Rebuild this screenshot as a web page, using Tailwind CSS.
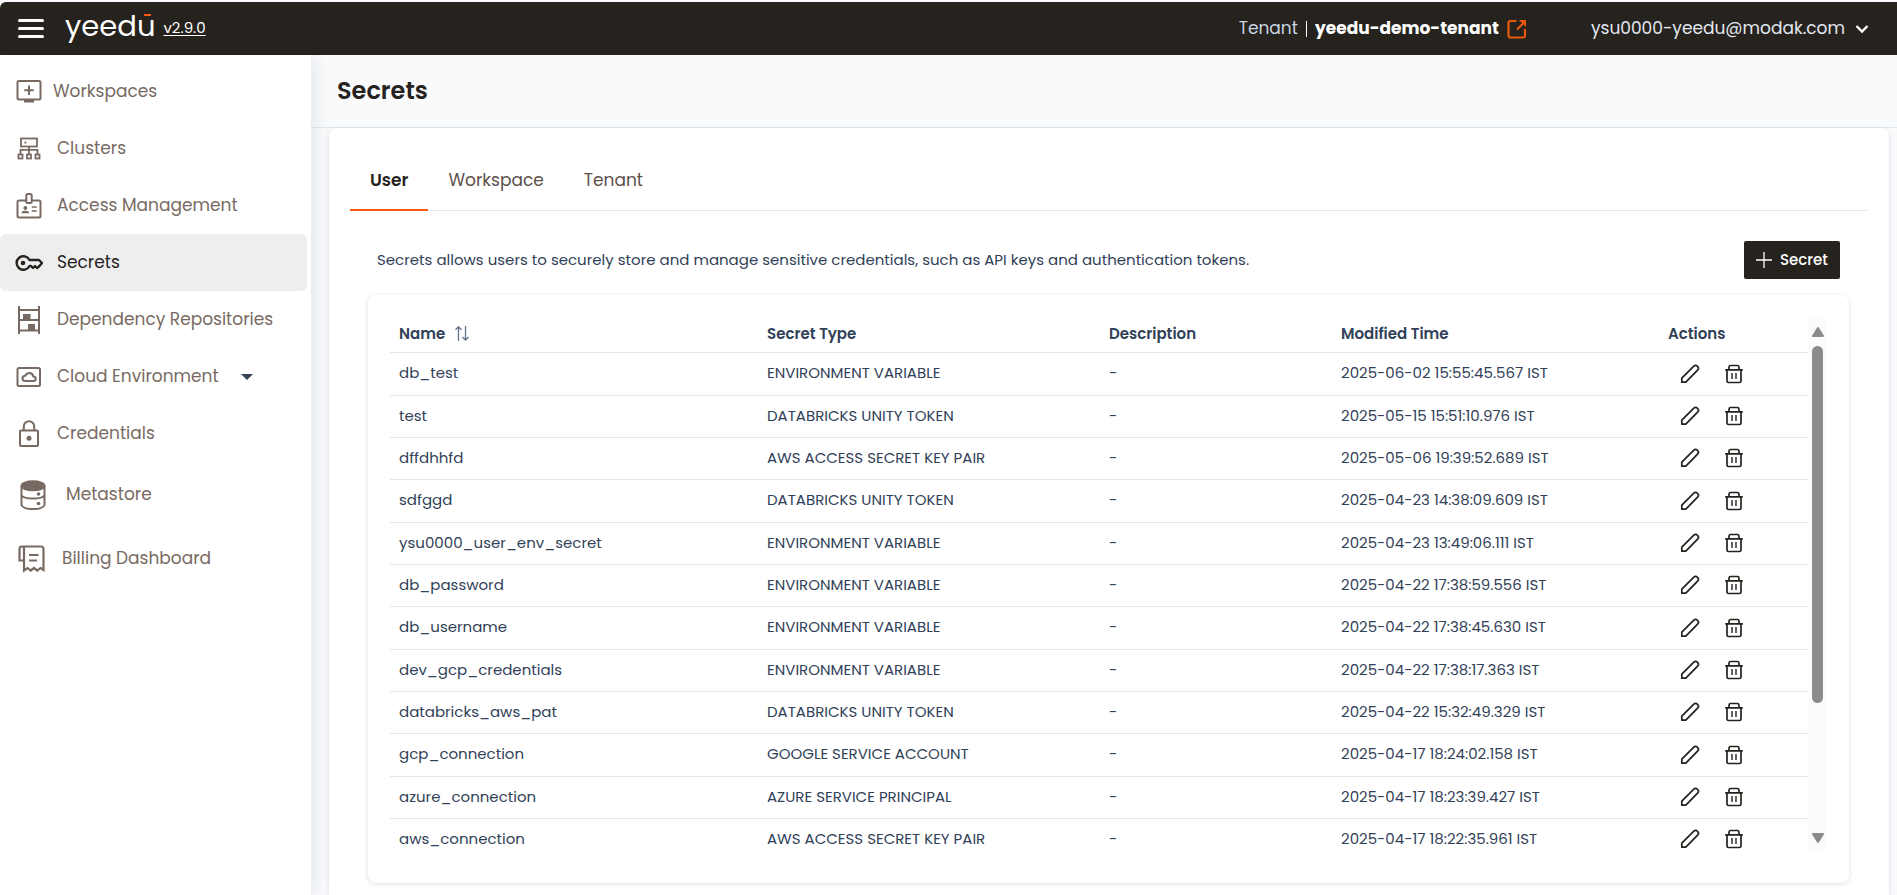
<!DOCTYPE html>
<html lang="en">
<head>
<meta charset="utf-8">
<meta name="viewport" content="width=device-width, initial-scale=1">
<title>Secrets - Yeedu</title>
<script src="https://cdn.jsdelivr.net/npm/@tailwindcss/browser@4"></script>
</head>
<body class="flex h-screen flex-col overflow-hidden bg-slate-50 pt-[2px] font-['Poppins','Inter',sans-serif] text-slate-700">

<svg class="hidden" aria-hidden="true">
  <symbol id="pencil" viewBox="0 0 20 20"><path d="M1.800 18.200v-4L13.600 2.400a2.600 2.600 0 0 1 4 3.800L5.800 18.200z" fill="none" stroke="#26221e" stroke-width="1.700" stroke-linejoin="round"/></symbol>
  <symbol id="trash" viewBox="0 0 20 20"><path d="M1.200 5.800h17.600M5 5.500V3.600Q5 1.500 6.600 1.500h6.800Q15 1.500 15 3.600v1.900M3 6v11q0 1.500 1.500 1.500h11q1.500 0 1.500-1.500V6" fill="none" stroke="#26221e" stroke-width="1.700"/><path d="M8 9v6M12 9v6" fill="none" stroke="#26221e" stroke-width="1.400"/></symbol>
</svg>

<header class="flex h-[53px] shrink-0 items-center justify-between rounded-tl-md bg-[#26221e] pr-7 pl-[18px]">
  <div class="flex items-center">
    <button type="button" aria-label="Toggle menu" class="flex w-[26px] flex-col gap-[5px]">
      <span class="h-[3px] w-full rounded-full bg-white"></span>
      <span class="h-[3px] w-full rounded-full bg-white"></span>
      <span class="h-[3px] w-full rounded-full bg-white"></span>
    </button>
    <a href="#" aria-label="yeedu home" class="relative ml-[21px] pb-[6px] text-[29px] leading-8 text-white">yeedu<span class="absolute top-1 right-1 h-[2px] w-[7px] bg-[#f4590b]"></span></a>
    <a href="#" class="ml-2 text-[15px] text-white underline underline-offset-2">v2.9.0</a>
  </div>
  <div class="flex items-center text-[17px]">
    <span class="text-slate-300">Tenant</span>
    <span class="mx-2 h-4 w-px bg-white"></span>
    <a href="#" class="flex items-center gap-2 font-bold text-white">yeedu-demo-tenant
      <svg class="size-5" viewBox="0 0 20 20" fill="none" stroke="#e8590c" stroke-width="2.200"><path d="M9.500 2H3.500Q1.500 2 1.500 4v12.500q0 2 2 2h12.500q2 0 2-2v-6.500"/><path d="M10 10.500l7-7"/><path d="M12 1h7v7z" fill="#e8590c" stroke="none"/></svg></a>
    <button type="button" class="ml-16 flex items-center gap-[10px] text-slate-200">ysu0000-yeedu@modak.com
      <svg class="h-3 w-[14px]" viewBox="0 0 14 12" fill="none" stroke="#fff" stroke-width="2.400"><path d="M1.500 3l5.500 5.500L12.500 3"/></svg></button>
  </div>
</header>

<div class="flex min-h-0 flex-1">
  <nav class="z-10 w-[311px] shrink-0 bg-white pt-2 text-[17px] text-[#786a62] shadow-[4px_0_16px_rgba(15,23,42,0.08)]">
    <ul>
      <li><a href="#" class="mr-1 flex h-[57px] items-center gap-[11px] pl-4">
        <svg class="size-[26px]" viewBox="0 0 26 26" fill="none" stroke="currentColor" stroke-width="2"><rect x="1.500" y="2" width="23" height="18.500" rx="1.500"/><path d="M13 6.500v9.500M8.300 11.200h9.400"/><path d="M8 20.500h10v3H8z" fill="currentColor" stroke="none"/></svg>Workspaces</a></li>
      <li><a href="#" class="mr-1 flex h-[57px] items-center gap-[15px] pl-4">
        <svg class="size-[26px]" viewBox="0 0 26 26" fill="none" stroke="currentColor" stroke-width="1.800"><rect x="5" y="2.500" width="16" height="8"/><path d="M8.500 6.500h1.800M13 10.500v8M4.500 18.500v-4.700h17v4.700"/><rect x="2.500" y="18.500" width="4" height="4"/><rect x="11" y="18.500" width="4" height="4"/><rect x="19.500" y="18.500" width="4" height="4"/></svg>Clusters</a></li>
      <li><a href="#" class="mr-1 flex h-[57px] items-center gap-[15px] pl-4">
        <svg class="size-[26px]" viewBox="0 0 26 26" fill="none" stroke="currentColor" stroke-width="2"><path d="M10 7.500H3Q1.500 7.500 1.500 9v14Q1.500 24.500 3 24.500h20q1.500 0 1.500-1.500V9Q24.500 7.500 23 7.500h-7"/><rect x="10.300" y="1" width="5.400" height="9" rx="1.500"/><circle cx="9.300" cy="15" r="1.900" fill="currentColor" stroke="none"/><path d="M5.500 20.200q0-2.400 3.800-2.400t3.800 2.400z" fill="currentColor" stroke="none"/><path d="M15.800 14h5M15.800 18h5" stroke-width="1.600"/></svg>Access Management</a></li>
      <li><a href="#" aria-current="page" class="mr-1 flex h-[57px] items-center gap-[14px] rounded-md bg-[#eeeeee] pl-[15px] text-[#26221e]">
        <svg class="h-4 w-7" viewBox="0 0 28 16" fill="none" stroke="currentColor" stroke-width="2.400"><path d="M14.500 5A6.800 6.800 0 1 0 14.500 11h1.500l2 2 2-2 2 2 2-1.500L27 8l-3-3z" stroke-linejoin="round"/><circle cx="8" cy="8" r="2.300" fill="currentColor" stroke="none"/></svg>Secrets</a></li>
      <li><a href="#" class="mr-1 flex h-[57px] items-center gap-[15px] pl-4">
        <svg class="h-7 w-[26px]" viewBox="0 0 26 28" fill="none" stroke="currentColor" stroke-width="2"><path d="M3 0v28M23 0v28M3 4h20M3 14h20M3 24.500h20"/><path d="M7 8h7.500v6H7zM12 18h7v6h-7z" fill="currentColor" stroke="none"/></svg>Dependency Repositories</a></li>
      <li><a href="#" class="mr-1 flex h-[57px] items-center gap-[15px] pl-4">
        <svg class="size-[26px]" viewBox="0 0 26 26" fill="none" stroke="currentColor" stroke-width="2"><rect x="1.500" y="4" width="22.500" height="18" rx="1.500"/><path d="M8.500 17h9q2.300-.3 2.300-2.300t-2.500-2.300Q16.500 9 13.500 9T9.500 11.500Q6.500 12 6.500 14.300T8.500 17z"/></svg>Cloud Environment
        <svg class="ml-[7px] h-[6px] w-3" viewBox="0 0 12 6"><path d="M0 0h12L6 6z" fill="#334155"/></svg></a></li>
      <li><a href="#" class="mr-1 flex h-[57px] items-center gap-[15px] pl-4">
        <svg class="h-7 w-[26px]" viewBox="0 0 26 28" fill="none" stroke="currentColor" stroke-width="2"><rect x="4" y="10.500" width="18" height="15.500" rx="1"/><path d="M7.800 10.500V6.500a5.200 5.200 0 0 1 10.400 0v4"/><circle cx="13" cy="18.200" r="2.500" fill="currentColor" stroke="none"/></svg>Credentials</a></li>
      <li><a href="#" class="mr-1 flex h-[65px] items-center gap-5 pl-5">
        <svg class="h-[30px] w-[26px]" viewBox="0 0 26 30" fill="none" stroke="currentColor" stroke-width="2"><ellipse cx="13" cy="5.800" rx="11.500" ry="4.500" fill="currentColor"/><path d="M1.500 6v19q1.500 4 11.500 4t11.500-4V6M1.500 15.500q2 3 11.500 3t11.500-3"/><circle cx="18.500" cy="14" r="1.800" fill="currentColor" stroke="none"/><circle cx="18.500" cy="23.500" r="1.800" fill="currentColor" stroke="none"/></svg>Metastore</a></li>
      <li><a href="#" class="mr-1 flex h-16 items-center gap-4 pl-[18px]">
        <svg class="size-7" viewBox="0 0 28 28" fill="none" stroke="currentColor" stroke-width="2.200"><path d="M6 15.500H1.500V4Q1.500 1.500 4 1.500h19q2.500 0 2.500 2.500v21l-3-2-3.200 2.500-3.300-2.500-3.300 2.500-3.200-2.500L6 25.500V4Q6 2 5 1.500"/><path d="M11 10h9.500M11 15.500h8"/></svg>Billing Dashboard</a></li>
    </ul>
  </nav>

  <main class="flex min-w-0 flex-1 flex-col">
    <div class="flex h-[73px] shrink-0 items-center border-b border-slate-200 pl-[26px]">
      <h1 class="text-2xl font-semibold text-[#26221e]">Secrets</h1>
    </div>
    <section class="mr-2 ml-[18px] flex-1 rounded-t-lg bg-white px-[21px] pt-6 shadow-[0_1px_4px_rgba(15,23,42,0.14)]">
      <div role="tablist" class="flex border-b border-slate-200 text-[17px] text-[#5b514b]">
        <button type="button" role="tab" aria-selected="true" class="-mb-px h-[59px] border-b-2 border-[#fa5a0f] px-5 font-semibold text-[#26221e]">User</button>
        <button type="button" role="tab" aria-selected="false" class="h-[58px] px-5">Workspace</button>
        <button type="button" role="tab" aria-selected="false" class="h-[58px] px-5">Tenant</button>
      </div>
      <div class="mt-[30px] flex items-center justify-between pr-[28px] pl-[27px]">
        <p class="text-[15px]">Secrets allows users to securely store and manage sensitive credentials, such as API keys and authentication tokens.</p>
        <button type="button" class="flex h-[38px] w-24 items-center justify-center gap-2 rounded-xs bg-[#26221e] text-[15px] font-medium text-white">
          <svg class="size-4" viewBox="0 0 16 16" stroke="#fff" stroke-width="1.300"><path d="M8 0v16M0 8h16"/></svg>Secret</button>
      </div>
      <div class="mt-4 mr-[19px] ml-[18px] rounded-lg bg-white px-[22px] pt-[22px] pb-8 shadow-[0_1px_4px_rgba(15,23,42,0.14)]">
        <div class="flex h-[534px] overflow-hidden">
          <div class="min-w-0 flex-1 overflow-hidden">
            <table class="w-full table-fixed border-collapse text-left text-[15px]">
              <colgroup>
                <col class="w-[368px]"><col class="w-[342px]"><col class="w-[232px]"><col class="w-[327px]"><col class="w-[149px]">
              </colgroup>
              <thead>
                <tr class="h-[35px] border-b border-slate-200">
                  <th class="px-[9px] font-semibold"><button type="button" class="flex items-center gap-[10px]">Name
                    <svg class="h-4 w-[14px]" viewBox="0 0 14 16" fill="none" stroke="#64748b" stroke-width="1.300"><path d="M3.500 15V.800M.5 3.800l3-3 3 3M10.500 0v14M7.500 11l3 3 3-3"/></svg></button></th>
                  <th class="px-[9px] font-semibold">Secret Type</th>
                  <th class="px-[9px] font-semibold">Description</th>
                  <th class="px-[9px] font-semibold">Modified Time</th>
                  <th class="px-[9px] font-semibold">Actions</th>
                </tr>
              </thead>
              <tbody id="rows"></tbody>
            </table>
          </div>
          <div class="flex w-[19px] shrink-0 flex-col items-center bg-[#fbfbfb] pt-[10px] pb-2" aria-hidden="true">
            <svg class="h-[10px] w-3" viewBox="0 0 12 10"><path d="M6 1l5 8H1z" fill="#8b8b8b" stroke="#8b8b8b" stroke-width="2" stroke-linejoin="round"/></svg>
            <div class="mt-[9px] h-[357px] w-[11px] rounded-full bg-[#8b8b8b]"></div>
            <svg class="mt-auto h-[10px] w-3" viewBox="0 0 12 10"><path d="M6 9l5-8H1z" fill="#8b8b8b" stroke="#8b8b8b" stroke-width="2" stroke-linejoin="round"/></svg>
          </div>
        </div>
      </div>
    </section>
  </main>
</div>

<script>
const secrets = [
  ["db_test", "ENVIRONMENT VARIABLE", "2025-06-02 15:55:45.567 IST"],
  ["test", "DATABRICKS UNITY TOKEN", "2025-05-15 15:51:10.976 IST"],
  ["dffdhhfd", "AWS ACCESS SECRET KEY PAIR", "2025-05-06 19:39:52.689 IST"],
  ["sdfggd", "DATABRICKS UNITY TOKEN", "2025-04-23 14:38:09.609 IST"],
  ["ysu0000_user_env_secret", "ENVIRONMENT VARIABLE", "2025-04-23 13:49:06.111 IST"],
  ["db_password", "ENVIRONMENT VARIABLE", "2025-04-22 17:38:59.556 IST"],
  ["db_username", "ENVIRONMENT VARIABLE", "2025-04-22 17:38:45.630 IST"],
  ["dev_gcp_credentials", "ENVIRONMENT VARIABLE", "2025-04-22 17:38:17.363 IST"],
  ["databricks_aws_pat", "DATABRICKS UNITY TOKEN", "2025-04-22 15:32:49.329 IST"],
  ["gcp_connection", "GOOGLE SERVICE ACCOUNT", "2025-04-17 18:24:02.158 IST"],
  ["azure_connection", "AZURE SERVICE PRINCIPAL", "2025-04-17 18:23:39.427 IST"],
  ["aws_connection", "AWS ACCESS SECRET KEY PAIR", "2025-04-17 18:22:35.961 IST"]
];
document.getElementById("rows").innerHTML = secrets.map(([name, type, time]) => `
  <tr class="h-[42px] border-b border-slate-200 nth-[3n+1]:h-[43px]">
    <td class="px-[9px]">${name}</td>
    <td class="px-[9px]">${type}</td>
    <td class="px-[9px]">-</td>
    <td class="px-[9px]">${time}</td>
    <td class="px-[9px]"><div class="flex gap-6 pl-3">
      <button type="button" aria-label="Edit ${name}"><svg class="size-5"><use href="#pencil"/></svg></button>
      <button type="button" aria-label="Delete ${name}"><svg class="size-5"><use href="#trash"/></svg></button>
    </div></td>
  </tr>`).join("");
</script>
</body>
</html>
